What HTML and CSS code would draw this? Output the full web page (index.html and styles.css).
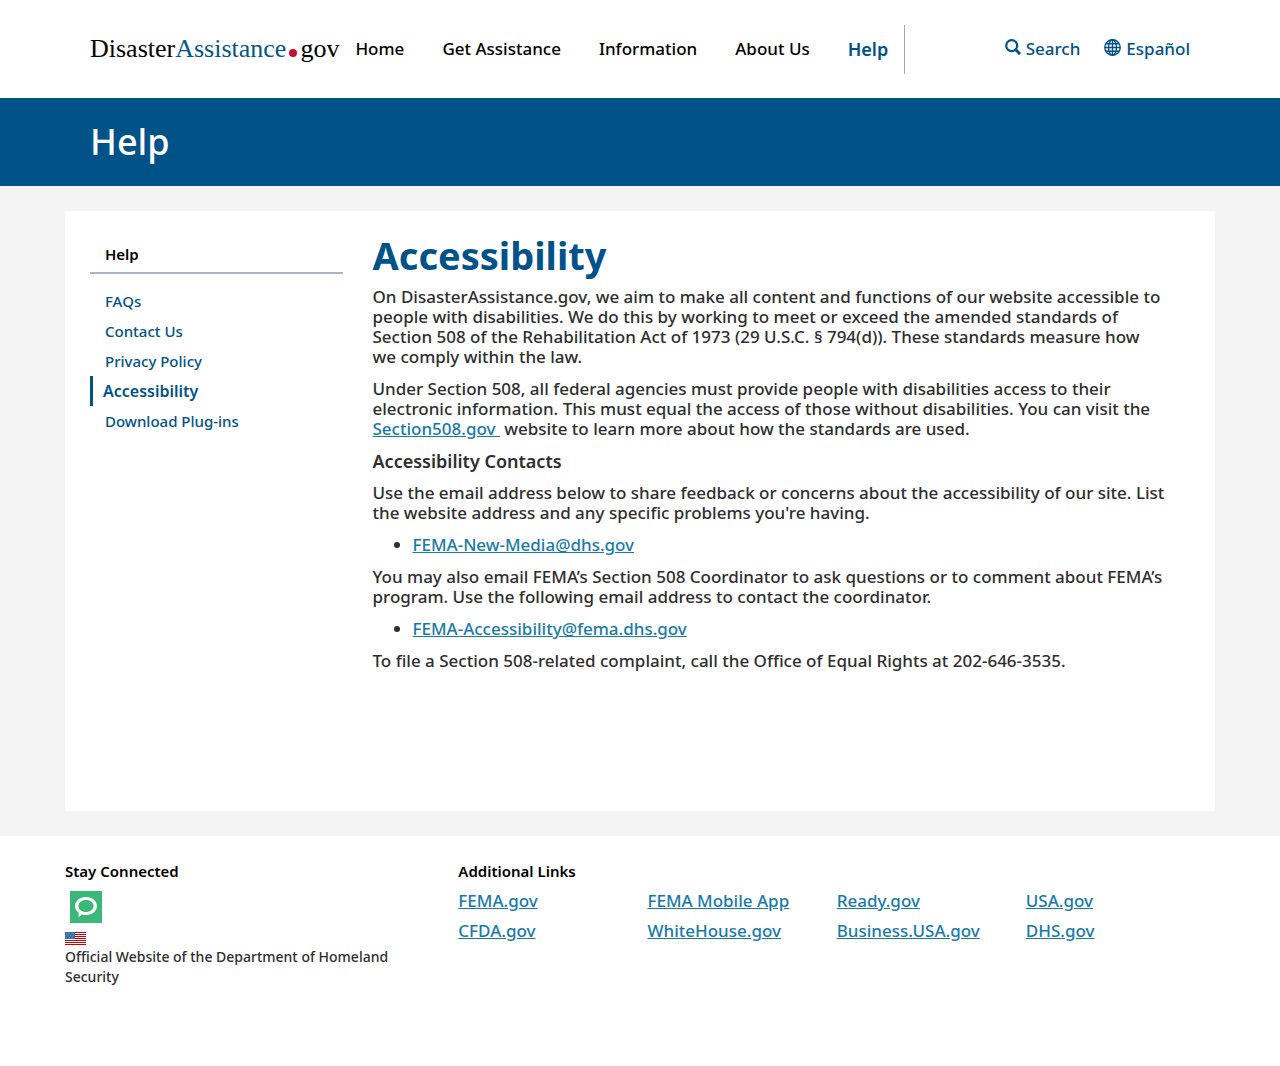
FILE: index.html
```html
<!DOCTYPE html>
<html lang="en">
<head>
<meta charset="utf-8">
<meta name="viewport" content="width=device-width, initial-scale=1">
<title>Accessibility | DisasterAssistance.gov</title>
<link rel="stylesheet" href="styles.css">
</head>
<body>
<header class="site-header">
  <div class="container header-inner">
    <a class="logo" href="#" aria-label="DisasterAssistance.gov">Disaster<span class="logo-blue">Assistance</span><span class="logo-dot"></span>gov</a>
    <nav class="main-nav" aria-label="Main">
      <a href="#">Home</a>
      <a href="#">Get Assistance</a>
      <a href="#">Information</a>
      <a href="#">About Us</a>
      <a class="current" href="#">Help</a>
    </nav>
    <div class="tools">
      <a href="#"><svg width="16" height="16" viewBox="0 0 16 16" fill="none" stroke="currentColor" aria-hidden="true"><circle cx="6.7" cy="6.7" r="5.5" stroke-width="2.2"/><path d="M10.8 10.8L15 15" stroke-width="3"/></svg>Search</a>
      <a href="#"><svg width="17" height="17" viewBox="0 0 17 17" fill="none" stroke="currentColor" stroke-width="1.4" aria-hidden="true"><circle cx="8.5" cy="8.5" r="7.7"/><ellipse cx="8.5" cy="8.5" rx="4" ry="7.7"/><path d="M8.5 1v15M1 8.5h15M2 4.7h13M2 12.3h13"/></svg>Español</a>
    </div>
  </div>
</header>
<div class="banner">
  <div class="container banner-title">Help</div>
</div>
<main class="page">
  <div class="panel">
    <aside class="sidebar">
      <h2>Help</h2>
      <ul>
        <li><a href="#">FAQs</a></li>
        <li><a href="#">Contact Us</a></li>
        <li><a href="#">Privacy Policy</a></li>
        <li><a class="current" href="#">Accessibility</a></li>
        <li><a href="#">Download Plug-ins</a></li>
      </ul>
    </aside>
    <article class="content">
      <h1>Accessibility</h1>
      <p>On DisasterAssistance.gov, we aim to make all content and functions of our website accessible to<br>people with disabilities. We do this by working to meet or exceed the amended standards of<br>Section 508 of the Rehabilitation Act of 1973 (29 U.S.C. § 794(d)). These standards measure how<br>we comply within the law.</p>
      <p>Under Section 508, all federal agencies must provide people with disabilities access to their<br>electronic information. This must equal the access of those without disabilities. You can visit the<br><a href="#">Section508.gov&nbsp;</a> website to learn more about how the standards are used.</p>
      <h3>Accessibility Contacts</h3>
      <p>Use the email address below to share feedback or concerns about the accessibility of our site. List<br>the website address and any specific problems you're having.</p>
      <ul>
        <li><a href="#">FEMA-New-Media@dhs.gov</a></li>
      </ul>
      <p>You may also email FEMA’s Section 508 Coordinator to ask questions or to comment about FEMA’s<br>program. Use the following email address to contact the coordinator.</p>
      <ul>
        <li><a href="#">FEMA-Accessibility@fema.dhs.gov</a></li>
      </ul>
      <p>To file a Section 508-related complaint, call the Office of Equal Rights at 202-646-3535.</p>
    </article>
  </div>
</main>
<footer class="site-footer">
  <section>
    <h2>Stay Connected</h2>
    <a class="social" href="#" aria-label="GovDelivery"><svg width="32" height="32" viewBox="0 0 32 32" aria-hidden="true"><path fill="#3bb878" d="M0 0h32v32H0z"/><path fill="#fff" fill-rule="evenodd" d="M16 6c6.1 0 11 3.9 11 9s-4.900 9-11 9c-1.500 0-2.800-.2-4-.6L8.500 26.200l.3-4.500C6.400 20 5 17.700 5 15c0-5.100 4.900-9 11-9zm0 3c-4.300 0-7.600 2.600-7.600 6s3.300 6 7.600 6 7.600-2.600 7.600-6-3.300-6-7.600-6z"/></svg></a>
    <svg class="flag" width="21" height="13" viewBox="0 0 21 13" role="img" aria-label="United States flag"><path fill="#fff" d="M0 0h21v13H0z"/><path fill="#c8000a" d="M0 0h21v1H0zM0 2h21v1H0zM0 4h21v1H0zM0 6h21v1H0zM0 8h21v1H0zM0 10h21v1H0zM0 12h21v1H0z"/><path fill="#3474ab" d="M0 0h10v7H0z"/><path fill="#6597bd" d="M1 1h1v1H1zM4 1h1v1H4zM7 1h1v1H7zM2 3h1v1H2zM5 3h1v1H5zM8 3h1v1H8zM1 5h1v1H1zM4 5h1v1H4zM7 5h1v1H7z"/></svg>
    <p>Official Website of the Department of Homeland Security</p>
  </section>
  <section class="links">
    <h2>Additional Links</h2>
    <div class="link-grid">
      <a href="#">FEMA.gov</a>
      <a href="#">FEMA Mobile App</a>
      <a href="#">Ready.gov</a>
      <a href="#">USA.gov</a>
      <a href="#">CFDA.gov</a>
      <a href="#">WhiteHouse.gov</a>
      <a href="#">Business.USA.gov</a>
      <a href="#">DHS.gov</a>
    </div>
  </section>
</footer>
</body>
</html>
```
FILE: styles.css
```css
* { box-sizing: border-box; }
body {
  margin: 0;
  background: #fff;
  color: #2e2e2e;
  font: 500 17px/20px "Noto Sans", "Open Sans", sans-serif;
}
h1, h2, h3, p, ul { margin: 0; }
a { color: #187aab; }

.container {
  max-width: 1150px;
  margin: 0 auto;
  padding: 0 25px;
}

.header-inner {
  display: flex;
  align-items: center;
  min-height: 98px;
}
.logo {
  color: #000;
  font: 26px/32px "Liberation Serif", serif;
  text-decoration: none;
  white-space: nowrap;
}
.logo-blue { color: #00558c; }
.logo-dot {
  display: inline-block;
  width: 8px;
  height: 8px;
  margin: 0 3px;
  border-radius: 50%;
  background: #c8102e;
}
.main-nav {
  display: flex;
  align-items: center;
  gap: 38px;
  height: 49px;
  margin-left: 16px;
  padding-right: 16px;
  border-right: 1px solid #aaa;
  white-space: nowrap;
}
.main-nav a { color: #000; text-decoration: none; }
.main-nav .current { color: #005288; font-size: 18px; font-weight: 600; }
.tools {
  display: flex;
  gap: 24px;
  margin-left: auto;
}
.tools a {
  display: flex;
  gap: 5px;
  color: #005288;
  text-decoration: none;
}

.banner { background: #005288; }
.banner-title {
  padding-top: 20px;
  padding-bottom: 20px;
  color: #fff;
  font-size: 36px;
  line-height: 48px;
}

.page { padding: 25px 0; background: #f4f4f4; }
.panel {
  display: grid;
  grid-template-columns: repeat(4, 1fr);
  gap: 30px;
  max-width: 1150px;
  min-height: 600px;
  margin: 0 auto;
  padding: 25px;
  background: #fff;
}
.sidebar { font-size: 15px; }
.sidebar h2 {
  padding: 8px 15px;
  border-bottom: 2px solid #a9b4c2;
  color: #000;
  font-size: 15px;
  font-weight: 600;
}
.sidebar ul { margin-top: 12px; padding: 0; list-style: none; }
.sidebar a {
  display: block;
  padding: 5px 15px;
  color: #005288;
  text-decoration: none;
}
.sidebar .current {
  padding-left: 10px;
  border-left: 3px solid #005288;
  font-size: 16px;
  font-weight: 600;
}

.content {
  display: flex;
  flex-direction: column;
  gap: 12px;
  grid-column: span 3;
}
.content h1 {
  color: #005288;
  font-size: 38px;
  line-height: 39px;
}
.content h3 { font-size: 18px; font-weight: 600; }
.content ul { padding-left: 40px; }

.site-footer {
  display: grid;
  grid-template-columns: repeat(3, 1fr);
  gap: 30px;
  max-width: 1150px;
  margin: 0 auto;
  padding: 25px 0 80px;
}
.site-footer h2 {
  color: #000;
  font-size: 15px;
  font-weight: 600;
}
.site-footer p { font-size: 14px; }
.social, .flag { display: block; }
.social { height: 32px; margin: 10px 5px 9px; }
.flag { margin-bottom: 2px; }
.links { grid-column: span 2; }
.link-grid {
  display: grid;
  grid-template-columns: repeat(4, 1fr);
  gap: 10px 0;
  margin-top: 10px;
}
```
